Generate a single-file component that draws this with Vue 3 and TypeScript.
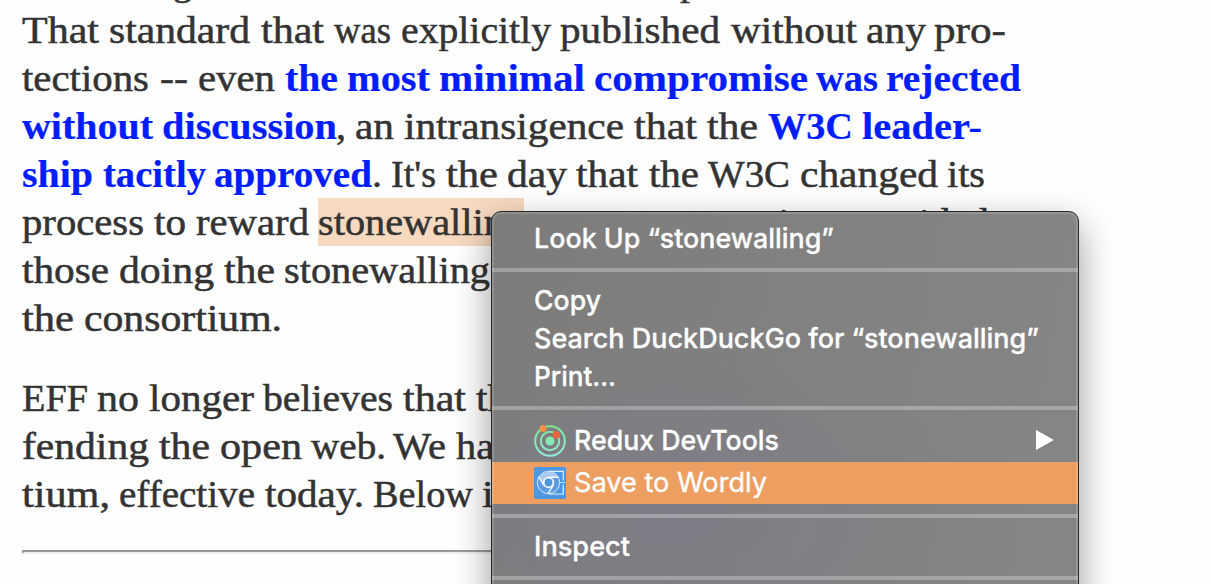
<script setup lang="ts">
type Kind = 'plain' | 'link' | 'mark'
interface Word {
  text: string
  start: number
  end: number
  kind: Kind
}
type Raw = [string, number, number, Kind?]

const LEFT = 22

// Each word carries the start and end of its advance on the line.
const line = (...raw: Raw[]): Word[] =>
  raw.map(([text, start, end, kind]) => ({ text, start, end, kind: kind ?? 'plain' }))

const first: Word[][] = [
  line(['g', 173, 192], ['p', 680, 700]),
  line(['That', 22, 99], ['standard', 109, 250], ['that', 261, 324], ['was', 334, 391], ['explicitly', 401, 551], ['published', 560, 720], ['without', 731, 857], ['any', 866, 926], ['pro-', 934, 1006]),
  line(['tections', 22, 149], ['--', 160, 188], ['even', 198, 275], ['the', 285, 338, 'link'], ['most', 347, 430, 'link'], ['minimal', 439, 585, 'link'], ['compromise', 594, 808, 'link'], ['was', 816, 878, 'link'], ['rejected', 886, 1021, 'link']),
  line(['without', 22, 153, 'link'], ['discussion', 162, 337, 'link'], [',', 336, 346], ['an', 355, 394], ['intransigence', 404, 624], ['that', 634, 697], ['the', 707, 758], ['W3C', 768, 853, 'link'], ['leader-', 862, 982, 'link']),
  line(['ship', 22, 93, 'link'], ['tacitly', 103, 206, 'link'], ['approved', 214, 372, 'link'], ['.', 372, 382], ["It's", 391, 436], ['the', 446, 498], ['day', 507, 567], ['that', 576, 638], ['the', 649, 699], ['W3C', 708, 790], ['changed', 800, 938], ['its', 947, 985]),
  line(['process', 22, 144], ['to', 154, 186], ['reward', 196, 309], ['stonewalling', 318, 524, 'mark'], ['over', 533, 605], ['compromise,', 615, 836], ['provided', 844, 989]),
  line(['those', 22, 109], ['doing', 119, 214], ['the', 224, 275], ['stonewalling', 284, 490]),
  line(['the', 22, 74], ['consortium.', 84, 282]),
]
const second: Word[][] = [
  line(['EFF', 22, 88], ['no', 97, 139], ['longer', 149, 254], ['believes', 263, 393], ['that', 403, 466], ['the', 476, 527]),
  line(['fending', 22, 149], ['the', 159, 210], ['open', 220, 302], ['web.', 311, 386], ['We', 393, 446], ['have', 456, 532]),
  line(['tium,', 22, 110], ['effective', 119, 255], ['today.', 265, 364], ['Below', 373, 473], ['is', 482, 510]),
]
const paragraphs = [first, second]

const wordStyle = (words: Word[], i: number) => ({
  width: `${words[i].end - words[i].start}px`,
  marginLeft: `${words[i].start - (i ? words[i - 1].end : LEFT)}px`,
})

// Stretches the inner text so that it fills the given width.
const vFit = {
  mounted(el: HTMLElement, binding: { value: number }) {
    const ink = el.firstElementChild as HTMLElement
    const natural = ink.getBoundingClientRect().width
    if (natural > 0) ink.style.transform = `scaleX(${binding.value / natural})`
  },
}

interface Item {
  label: string
  width: number
  icon?: 'redux' | 'chrome'
  submenu?: boolean
  active?: boolean
}
const groups: Item[][] = [
  [{ label: 'Look Up “stonewalling”', width: 300 }],
  [
    { label: 'Copy', width: 67 },
    { label: 'Search DuckDuckGo for “stonewalling”', width: 505 },
    { label: 'Print…', width: 82 },
  ],
  [
    { label: 'Redux DevTools', width: 205, icon: 'redux', submenu: true },
    { label: 'Save to Wordly', width: 193, icon: 'chrome', active: true },
  ],
  [{ label: 'Inspect', width: 96 }],
  [],
]
</script>

<template>
  <main class="page">
    <article class="article">
      <p v-for="(lines, p) in paragraphs" :key="p" class="para">
        <span v-for="(words, l) in lines" :key="l" class="line">
          <span
            v-for="(w, i) in words"
            :key="i"
            v-fit="w.end - w.start"
            class="word"
            :class="w.kind"
            :style="wordStyle(words, i)"
          ><span class="ink">{{ w.text }}</span></span>
        </span>
      </p>
      <div class="rule"></div>
    </article>

    <nav class="menu">
      <template v-for="(group, g) in groups" :key="g">
        <div v-if="g" class="separator"></div>
        <div
          v-for="item in group"
          :key="item.label"
          class="item"
          :class="{ tall: item.icon, active: item.active }"
        >
          <svg v-if="item.icon === 'redux'" class="icon" viewBox="0 0 32 32">
            <defs>
              <linearGradient id="ring" gradientUnits="userSpaceOnUse" x1="16" y1="0" x2="16" y2="32">
                <stop offset="0" stop-color="#7fe58b" />
                <stop offset="1" stop-color="#92ebe0" />
              </linearGradient>
            </defs>
            <circle cx="16" cy="16" r="14.8" fill="none" stroke="url(#ring)" stroke-width="2" />
            <circle cx="16" cy="16" r="9.2" fill="none" stroke="url(#ring)" stroke-width="2" />
            <circle cx="16" cy="16" r="4.5" fill="url(#ring)" />
            <circle cx="9" cy="3.4" r="3.5" fill="#ed9248" />
            <circle cx="22.3" cy="10" r="3.7" fill="#e9663f" />
          </svg>
          <svg v-else-if="item.icon === 'chrome'" class="icon" viewBox="0 0 32 32">
            <rect width="32" height="32" rx="2" fill="#4b94e0" />
            <path d="M3.5 0V32M10 0V32M16 0V32M22 0V32M28.5 0V32M0 4H32M0 10H32M0 16H32M0 22H32M0 28H32" stroke="#67a7e9" stroke-width=".5" fill="none" />
            <circle cx="14.5" cy="15.5" r="11.2" fill="#5c9de2" stroke="#d5e7fa" stroke-width="1" />
            <path d="M4.9 9.9A11.2 11.2 0 0 1 24.2 10H14.5A5.5 5.5 0 0 0 9.5 17Z" fill="#a9caf0" />
            <path d="M14.5 4.3H29.3V13.5M29.3 17.5V27H15" fill="none" stroke="#dcebfb" stroke-width="1.2" />
            <path d="M14.5 10.2H24.4M4.9 9.9L9.8 18.4M19.3 18.2L14 26.7" fill="none" stroke="#f0f7fe" stroke-width="1.4" />
            <path d="M26 15.5H31" stroke="#dcebfb" stroke-width=".8" />
            <circle cx="14.5" cy="15.5" r="4.8" fill="#4f96df" stroke="#f4f9fe" stroke-width="1.8" />
          </svg>
          <span v-fit="item.width" class="label"><span class="ink">{{ item.label }}</span></span>
          <svg v-if="item.submenu" class="arrow" viewBox="0 0 18 20">
            <path d="M0 0L18 10L0 20Z" fill="#fff" />
          </svg>
        </div>
      </template>
    </nav>
  </main>
</template>

<style>
html,
body {
  margin: 0;
  overflow: hidden;
  background: #fefefe;
}
</style>

<style scoped>
.page {
  position: relative;
  box-sizing: border-box;
  width: 1211px;
  height: 584px;
  overflow: hidden;
  background: #fefefe;
}
.article {
  width: 1000px;
  margin-top: -42px;
  padding-left: 22px;
  font-family: "Liberation Serif", serif;
  font-size: 37px;
  line-height: 48px;
  color: #333;
}
.page::before {
  content: "";
  display: table;
}
.para {
  margin: 0 0 32px;
}
.line {
  display: flex;
  height: 48px;
}
.word {
  flex: none;
  box-sizing: border-box;
  height: 48px;
  padding-top: 1px;
  white-space: nowrap;
  -webkit-text-stroke: 0.5px currentColor;
}
.ink {
  display: inline-block;
  transform-origin: 0 50%;
  white-space: nowrap;
}
.link {
  font-weight: 700;
  color: #001dff;
  -webkit-text-stroke: 0.2px currentColor;
}
.mark {
  background: #f7d9c0;
}
.rule {
  box-sizing: border-box;
  width: 998px;
  height: 4px;
  border: 2px solid;
  border-color: #999 #eee #eee #999;
}
.menu {
  position: absolute;
  left: 491px;
  top: 211px;
  box-sizing: border-box;
  width: 588px;
  height: 420px;
  padding-top: 8px;
  border: 1px solid #292929;
  border-radius: 10px;
  overflow: hidden;
  background:
    radial-gradient(ellipse 300px 190px at 180px 300px, rgba(124, 124, 137, 0.7), rgba(124, 124, 137, 0)),
    linear-gradient(100deg, #7d7c7b, #828282 60%, #858585);
  box-shadow: 0 14px 36px rgba(0, 0, 0, 0.4);
  font-family: Inter, "Liberation Sans", sans-serif;
  font-size: 27.5px;
  font-weight: 500;
  color: #fff;
  -webkit-text-stroke: 0.3px #fff;
}
.menu::after {
  content: "";
  position: absolute;
  inset: 0;
  border: 2px solid rgba(255, 255, 255, 0.14);
  border-radius: 9px;
}
.item {
  display: flex;
  align-items: center;
  height: 38px;
  padding: 0 24px 0 42px;
  line-height: 38px;
}
.item.tall {
  height: 42px;
}
.active {
  background: #ed9f62;
  font-weight: 400;
}
.icon {
  flex: none;
  width: 32px;
  height: 32px;
  margin-right: 8px;
}
.label {
  flex: 1;
  height: 38px;
  margin-top: -2px;
}
.arrow {
  flex: none;
  width: 18px;
  height: 20px;
  margin-top: -2px;
}
.separator {
  height: 4px;
  margin: 10px 0;
  background: rgba(255, 255, 255, 0.28);
}
</style>
